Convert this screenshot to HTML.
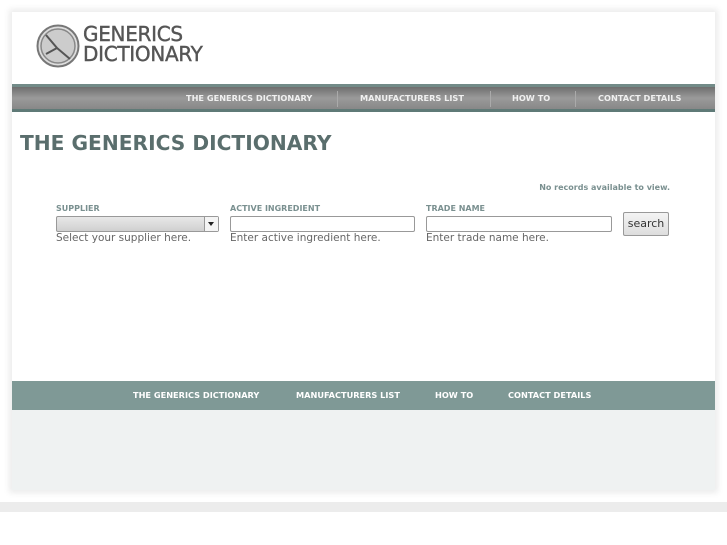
<!DOCTYPE html>
<html><head><style>
body{margin:0;width:727px;height:545px;background:#fff;font-family:"DejaVu Sans","Liberation Sans",sans-serif;position:relative;overflow:hidden}
.band{position:absolute;left:0;top:502px;width:727px;height:10px;background:#ececec}
.card{position:absolute;left:12px;top:12px;width:703px;height:478px;background:#fff;box-shadow:0 0 6px 3px rgba(0,0,0,.08)}
.logo{position:absolute;left:24px;top:12px}
.lt{position:absolute;left:71px;top:12px;color:#555;font-size:20px;line-height:20px;letter-spacing:-0.3px;-webkit-text-stroke:0.4px #555}
.nav{position:absolute;left:0;top:72px;width:703px;height:28px;box-sizing:border-box;border-top:3px solid #728b88;border-bottom:3px solid #5f7a77;background:linear-gradient(#6e6e6e,#9a9a9a 50%,#888)}
.nav span{position:absolute;top:6px;color:#f0f0f0;font-size:8.2px;font-weight:bold}
.sep{position:absolute;top:4px;width:1px;height:16px;background:#aaa}
h1{position:absolute;left:8px;top:119px;margin:0;font-size:20.2px;color:#5a6e6d;font-weight:bold}
.nr{position:absolute;right:45px;top:171px;font-size:8px;font-weight:bold;color:#7a9090}
.lab{position:absolute;top:192px;font-size:8px;font-weight:bold;color:#7a9090}
.inp{position:absolute;top:204px;height:16px;box-sizing:border-box;border:1px solid #999;border-radius:2px;background:#fff}
.hint{position:absolute;top:220px;font-size:10.5px;color:#666}
.btn{position:absolute;left:611px;top:200px;width:46px;height:24px;box-sizing:border-box;border:1px solid #999;border-radius:2px;background:linear-gradient(#f4f4f4,#ddd);font-size:11px;color:#333;text-align:center;line-height:22px}
.foot{position:absolute;left:0;top:369px;width:703px;height:29px;background:#7f9996}
.foot span{position:absolute;top:9px;color:#fff;font-size:8.2px;font-weight:bold}
.fl{position:absolute;left:0;top:398px;width:703px;height:80px;background:#eff2f2}
</style></head><body>
<div class="band"></div>
<div class="card">
<svg class="logo" width="44" height="44" viewBox="0 0 44 44"><circle cx="22" cy="22" r="20.5" fill="#ddd" stroke="#777" stroke-width="2"/><circle cx="22" cy="22" r="17" fill="#ccc" stroke="#888" stroke-width="1.5"/><path d="M10 11 L21 24 L10 30 M21 24 L34 35" stroke="#555" stroke-width="2" fill="none"/></svg>
<div class="lt">GENERICS<br>DICTIONARY</div>
<div class="nav">
<span style="left:174px">THE GENERICS DICTIONARY</span>
<div class="sep" style="left:325px"></div>
<span style="left:348px">MANUFACTURERS LIST</span>
<div class="sep" style="left:478px"></div>
<span style="left:500px">HOW TO</span>
<div class="sep" style="left:563px"></div>
<span style="left:586px">CONTACT DETAILS</span>
</div>
<h1>THE GENERICS DICTIONARY</h1>
<div class="nr">No records available to view.</div>
<div class="lab" style="left:44px">SUPPLIER</div>
<div class="lab" style="left:218px">ACTIVE INGREDIENT</div>
<div class="lab" style="left:414px">TRADE NAME</div>
<div class="inp" style="left:44px;width:163px;background:linear-gradient(#e8e8e8,#d0d0d0)"><div style="position:absolute;right:0;top:0;width:13px;height:14px;border-left:1px solid #999;background:#f4f4f4"><div style="position:absolute;left:3px;top:5px;border-left:3px solid transparent;border-right:3px solid transparent;border-top:4px solid #222"></div></div></div>
<div class="inp" style="left:218px;width:185px"></div>
<div class="inp" style="left:414px;width:186px"></div>
<div class="hint" style="left:44px">Select your supplier here.</div>
<div class="hint" style="left:218px">Enter active ingredient here.</div>
<div class="hint" style="left:414px">Enter trade name here.</div>
<div class="btn">search</div>
<div class="foot">
<span style="left:121px">THE GENERICS DICTIONARY</span>
<span style="left:284px">MANUFACTURERS LIST</span>
<span style="left:423px">HOW TO</span>
<span style="left:496px">CONTACT DETAILS</span>
</div>
<div class="fl"></div>
</div>
</body></html>
